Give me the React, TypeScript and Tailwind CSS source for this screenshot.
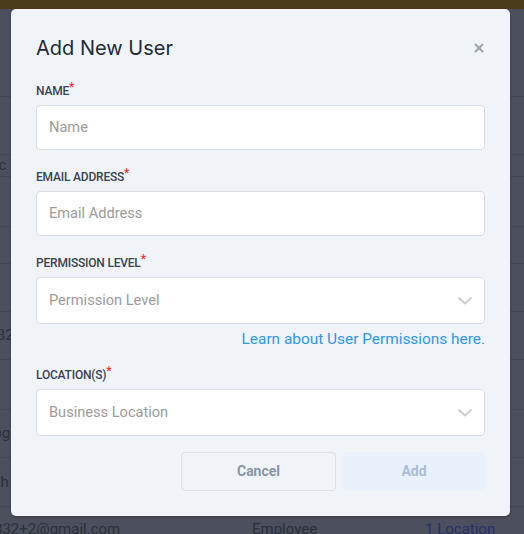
import { X } from 'lucide-react'

const rows = [
  { h: 'h-[88px]', text: '' },
  { h: 'h-[58px]', text: '' },
  { h: 'h-[22px]', text: 'Doc' },
  { h: 'h-[50px]', text: 'Se' },
  { h: 'h-[37px]', text: '' },
  { h: 'h-[48px]', text: '' },
  { h: 'h-[48px]', text: '1832' },
  { h: 'h-[50px]', text: 'kat' },
  { h: 'h-[48px]', text: 'a@g' },
  { h: 'h-[49px]', text: 'ua.h' },
]

function Chevron() {
  return (
    <svg width="14" height="8" viewBox="0 0 14 8" fill="none" className="mr-[3px]">
      <polyline points="1,1 7,6.5 13,1" stroke="#c9cbcf" strokeWidth="1.8" strokeLinecap="round" strokeLinejoin="round" />
    </svg>
  )
}

function Field({ label, placeholder, select }: { label: string; placeholder: string; select?: boolean }) {
  return (
    <div className="flex flex-col">
      <div className="text-[12px] font-medium uppercase tracking-[-0.2px] text-[#3a4350] leading-[14px]">
        {label}
        <span className="relative -top-[4px] text-[#ff2a2a] text-[12px]">*</span>
      </div>
      <div
        className={`mt-[7px] flex items-center justify-between rounded-[4px] border border-[#d9dfe7] bg-white pl-[12px] pr-[9px] ${
          select ? 'h-[47px]' : 'h-[45px]'
        }`}
      >
        <span className="text-[14.6px] text-[#9b9b9b]">{placeholder}</span>
        {select && <Chevron />}
      </div>
    </div>
  )
}

export default function App() {
  return (
    <div className="relative h-[534px] w-[524px] overflow-hidden bg-[#4b4f5e] font-['Roboto',sans-serif]">
      {/* page behind the overlay */}
      <div className="h-[9px] bg-[#4a3c1b]" />
      <div className="flex flex-col">
        {rows.map((r, i) => (
          <div key={i} className={`${r.h} flex items-center border-b border-[#43475a] text-[15px] text-[#2b2f3a]`}>
            <span className="-ml-[20px]">{r.text}</span>
          </div>
        ))}
        <div className="flex h-[40px] items-center text-[15px] text-[#2b2f3a] pt-[4px]">
          <span className="-ml-[6px] w-[258px]">832+2@gmail.com</span>
          <span className="w-[173px]">Employee</span>
          <span className="text-[#26306a]">1 Location</span>
        </div>
      </div>

      {/* modal */}
      <div className="absolute left-[11px] top-[9px] h-[507px] w-[499px] rounded-[5px] bg-[#f0f4f9] px-[25px] pt-[25px] shadow-[0_1px_3px_rgba(0,0,0,0.25)]">
        <div className="flex items-center justify-between">
          <h2 className="text-[20px] font-normal leading-[28px] text-[#1f2a37] font-['Inter',sans-serif]">Add New User</h2>
          <X className="mr-[-1px] h-[14px] w-[14px] text-[#9aa3ae]" strokeWidth={3.5} />
        </div>
        <div className="mt-[22px] flex flex-col gap-[20px]">
          <Field label="Name" placeholder="Name" />
          <Field label="Email Address" placeholder="Email Address" />
          <div className="flex flex-col">
            <Field label="Permission Level" placeholder="Permission Level" select />
            <div className="mt-[6px] text-right text-[15.4px] leading-[18px] text-[#2f97e8]">Learn about User Permissions here.</div>
          </div>
          <Field label="Location(s)" placeholder="Business Location" select />
        </div>
        <div className="mt-[16px] mr-[-1px] flex justify-end gap-[6px]">
          <button className="h-[39px] w-[155px] rounded-[4px] border border-[#dbe1e8] text-[14px] font-bold text-[#8a95a4]">
            Cancel
          </button>
          <button className="h-[38px] w-[144px] rounded-[4px] bg-[#e8f1fc] text-[14px] font-bold text-[#a9bdd5]">
            Add
          </button>
        </div>
      </div>
    </div>
  )
}
